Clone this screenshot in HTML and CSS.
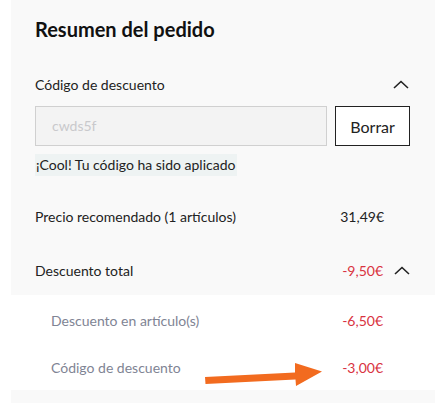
FILE: index.html
```html
<!DOCTYPE html>
<html lang="es">
<head>
<meta charset="utf-8">
<link rel="stylesheet" href="styles.css">
</head>
<body>
<div class="summary">
  <section class="panel">
    <h2 class="title">Resumen del pedido</h2>
    <div class="row code-head">
      <span>Código de descuento</span>
      <svg class="chev" width="16" height="9" viewBox="0 0 16 9"><path d="M1 8 L8 1.5 L15 8" fill="none" stroke="#222" stroke-width="1.6"/></svg>
    </div>
    <div class="code-form">
      <div class="code-input">cwds5f</div>
      <button class="btn">Borrar</button>
    </div>
    <div class="success">¡Cool! Tu código ha sido aplicado</div>
    <div class="row line first">
      <span>Precio recomendado (1 artículos)</span>
      <span class="amount">31,49€</span>
    </div>
    <div class="row line total">
      <span>Descuento total</span>
      <span class="amount red">-9,50€</span>
      <svg class="chev" width="16" height="9" viewBox="0 0 16 9"><path d="M1 8 L8 1.5 L15 8" fill="none" stroke="#222" stroke-width="1.6"/></svg>
    </div>
  </section>
  <section class="details">
    <div class="row sub">
      <span>Descuento en artículo(s)</span>
      <span class="amount red">-6,50€</span>
    </div>
    <div class="row sub">
      <span>Código de descuento</span>
      <span class="amount red">-3,00€</span>
    </div>
    <svg class="arrow" width="130" height="30" viewBox="0 0 130 30"><polygon points="0,14 90,9.5 90,0 117,8.5 91,23 90.5,16.5 0.5,21" fill="#f26b1f"/></svg>
  </section>
  <section class="panel tail"></section>
</div>
</body>
</html>
```
FILE: styles.css
```css
html, body {
  margin: 0;
  padding: 0;
  background: #ffffff;
}
body {
  font-family: Lato, "Open Sans", sans-serif;
  color: #222;
  font-size: 14px;
}
.summary {
  width: 424px;
  margin-left: 11px;
}
.panel {
  background: #f9f9f9;
  padding: 15px 25px 0 24px;
  height: 280px;
}
.panel.tail {
  height: 13px;
  padding: 0;
}
.title {
  margin: 0;
  font-size: 20px;
  font-weight: 700;
  line-height: 28px;
  color: #111;
}
.row {
  display: flex;
  align-items: center;
}
.row > span:first-child {
  flex: 1;
}
.code-head {
  margin-top: 28px;
  height: 26px;
}
.code-head .chev {
  margin-right: 1px;
}
.code-form {
  display: flex;
  gap: 8px;
  margin-top: 9px;
}
.code-input {
  width: 275px;
  height: 38px;
  border: 1px solid #d0d0d0;
  background: #f3f3f3;
  color: #c9c9cc;
  font-size: 14px;
  line-height: 38px;
  padding-left: 16px;
}
.btn {
  width: 75px;
  height: 40px;
  border: 1px solid #222;
  background: #ffffff;
  font-family: Lato, sans-serif;
  font-size: 16px;
  color: #222;
  padding: 0;
}
.success {
  display: inline-block;
  margin-top: 8px;
  background: #eef3f3;
  padding: 0 2px 0 1px;
  height: 22px;
  line-height: 22px;
  color: #222;
}
.line {
  height: 26px;
  margin-top: 28px;
  padding-right: 26px;
}
.line.first {
  margin-top: 27px;
}
.line.total {
  padding-right: 0;
  margin-top: 28px;
}
.total .amount {
  margin-right: 11px;
}
.red {
  color: #d9333f;
}
.details {
  position: relative;
  height: 95px;
  padding: 0 52px 0 40px;
  background: #ffffff;
}
.sub {
  height: 24px;
  color: #808494;
}
.sub:first-child {
  padding-top: 13px;
}
.sub + .sub {
  margin-top: 23px;
}
.arrow {
  position: absolute;
  left: 194px;
  top: 68px;
}
```
